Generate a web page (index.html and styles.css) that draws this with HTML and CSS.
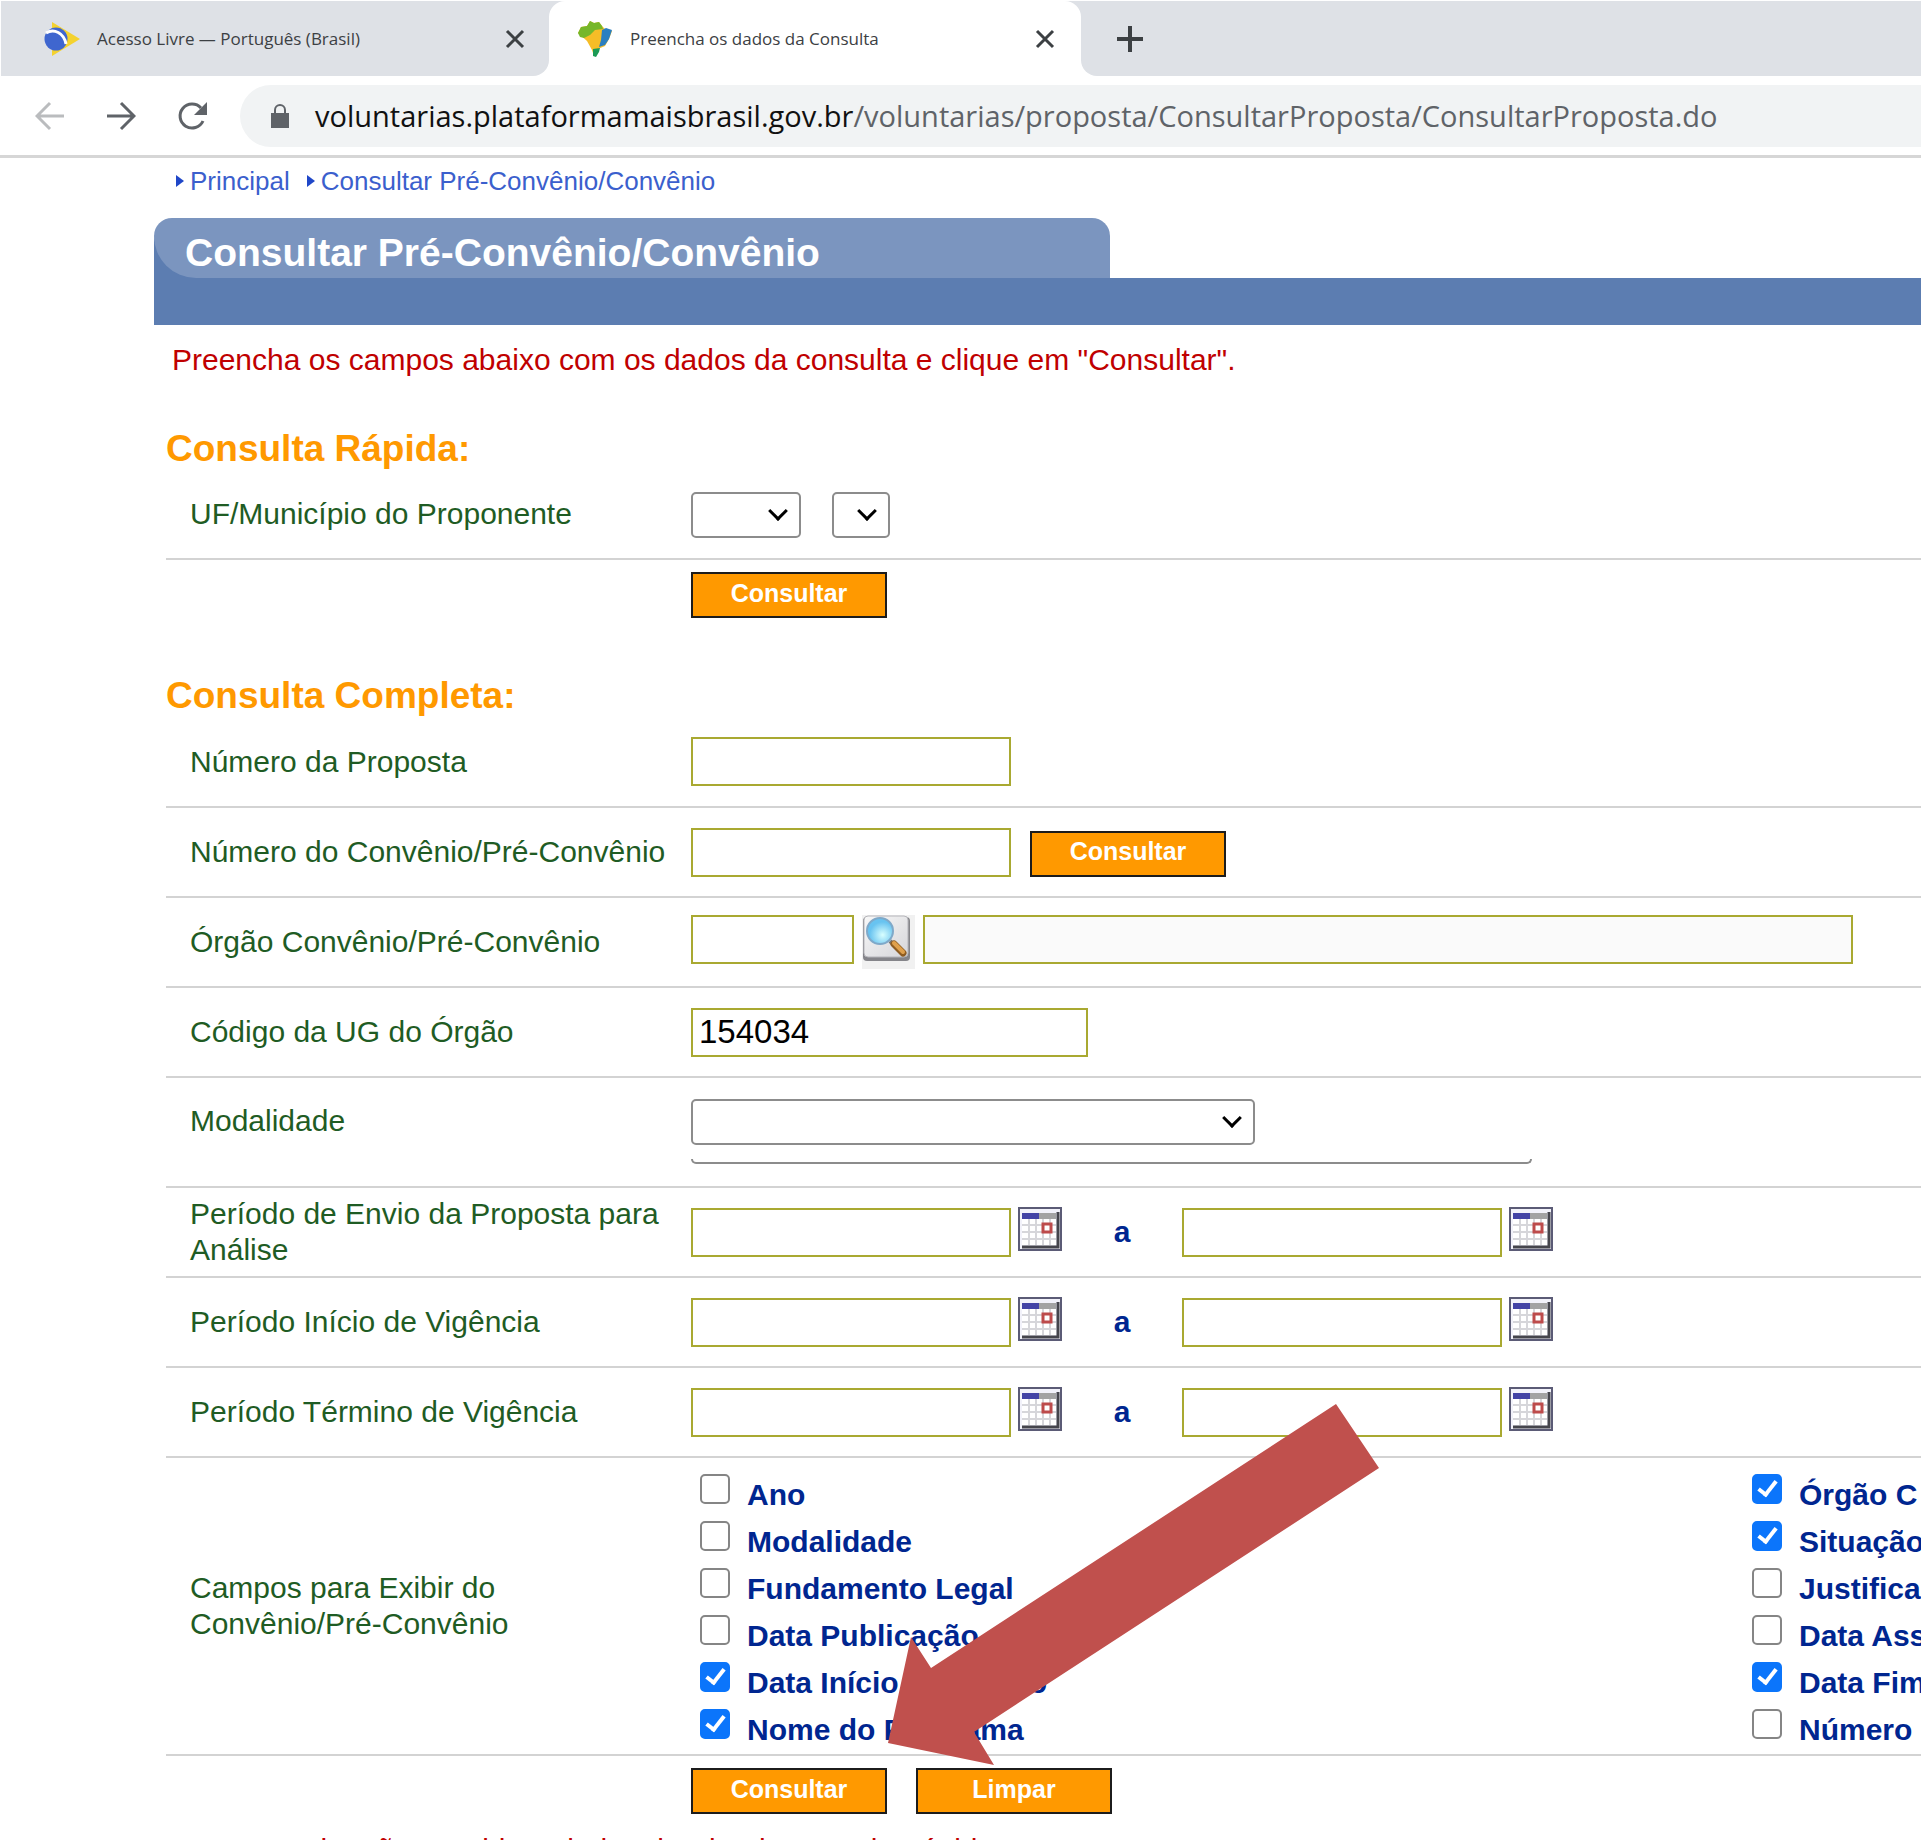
FILE: index.html
```html
<!DOCTYPE html>
<html lang="pt-BR">
<head>
<meta charset="utf-8">
<title>Preencha os dados da Consulta</title>
<link rel="stylesheet" href="styles.css">
</head>
<body>
<svg class="defs" aria-hidden="true">
  <symbol id="cal" viewBox="0 0 44 44">
    <rect x="1" y="1" width="42" height="42" fill="#f2f2fa" stroke="#5b5b76" stroke-width="2"/>
    <path d="M4 6h34v6H4z" fill="#a3a3a3"/>
    <path d="M4 6h17v6H4z" fill="#4343a5"/>
    <path d="M4 12h34v26H4z" fill="#fff"/>
    <path d="M11 12v26M18 12v26M25 12v26M32 12v26M4 18h34M4 25h34M4 32h34" stroke="#d6d6da" stroke-width="2"/>
    <path d="M4 40h36V5" fill="none" stroke="#45454c" stroke-width="3"/>
    <rect x="25" y="17" width="8" height="8" fill="#fff" stroke="#bd4b4b" stroke-width="3"/>
  </symbol>
  <symbol id="close" viewBox="0 0 20 20"><path d="M2 2l16 16M18 2L2 18" stroke="#3c4043" stroke-width="3"/></symbol>
</svg>

<header class="browser">
  <div class="tabs">
    <div class="tab">
      <svg class="fav" viewBox="0 0 36 36"><path d="M8 1L36 18 8 35z" fill="#f4d22f"/><circle cx="12" cy="18" r="11.5" fill="#3f66cf"/><path d="M2 12C10 7 20 12 22 23" fill="none" stroke="#fff" stroke-width="3"/></svg>
      <span class="tab-title">Acesso Livre — Português (Brasil)</span>
      <button class="icon-btn" aria-label="Fechar guia"><svg class="x"><use href="#close"/></svg></button>
    </div>
    <div class="tab active">
      <svg class="fav" viewBox="0 0 36 36"><path d="M1 12l3-6 6-1 3-5 4 2 5-1 3 4 3 3 7 2-3 8-4 7-7 3-5 6 1 1-2-6-5-9z" fill="#f6bd27"/><path d="M1 12l3-6 6-1 3-5 4 2 5-1 3 4 1 3-8 1-5 5-6 3-4-1z" fill="#76b72a"/><path d="M25 9l4-2 6 2-3 9-4 6-6 2 2-7z" fill="#2a7fc0"/><path d="M16 28l7-1-1 4-3 5-3-1z" fill="#1c9a55"/></svg>
      <span class="tab-title">Preencha os dados da Consulta</span>
      <button class="icon-btn" aria-label="Fechar guia"><svg class="x"><use href="#close"/></svg></button>
    </div>
    <button class="icon-btn new-tab" aria-label="Nova guia"><svg class="plus" viewBox="0 0 26 26"><path d="M13 0v26M0 13h26" stroke="#3c4043" stroke-width="4"/></svg></button>
  </div>
  <nav class="toolbar">
    <button class="icon-btn" aria-label="Voltar"><svg class="nav-ico" viewBox="0 0 30 30"><path d="M29 15H2M15 2L2 15l13 13" fill="none" stroke="#babcbe" stroke-width="3"/></svg></button>
    <button class="icon-btn" aria-label="Avançar"><svg class="nav-ico" viewBox="0 0 30 30"><path d="M1 15h27M15 2l13 13-13 13" fill="none" stroke="#5f6368" stroke-width="3"/></svg></button>
    <button class="icon-btn" aria-label="Recarregar"><svg class="nav-ico" viewBox="0 0 30 30"><path d="M26 20A12 12 0 1 1 24 7" fill="none" stroke="#5f6368" stroke-width="3"/><path d="M30 1v13H17z" fill="#5f6368"/></svg></button>
    <div class="address">
      <svg class="lock" viewBox="0 0 18 24"><path d="M0 9h18v15H0z" fill="#5f6368"/><path d="M4 10V6a5 5 0 0 1 10 0v4" fill="none" stroke="#5f6368" stroke-width="2"/></svg>
      <span class="url"><span class="host">voluntarias.plataformamaisbrasil.gov.br</span>/voluntarias/proposta/ConsultarProposta/ConsultarProposta.do</span>
    </div>
  </nav>
</header>

<main class="page">
  <nav class="crumbs"><a href="#">Principal</a><a href="#">Consultar Pré-Convênio/Convênio</a></nav>
  <div class="banner"><h1>Consultar Pré-Convênio/Convênio</h1></div>
  <p class="notice">Preencha os campos abaixo com os dados da consulta e clique em "Consultar".</p>

  <form class="form">
    <h2>Consulta Rápida:</h2>
    <div class="row">
      <label for="uf">UF/Município do Proponente</label>
      <div class="fields wide-gap">
        <span class="select s-uf"><select id="uf"><option></option></select></span>
        <span class="select s-mun"><select aria-label="Município"><option></option></select></span>
      </div>
    </div>
    <div class="actions"><button type="button" class="btn">Consultar</button></div>

    <h2 class="full">Consulta Completa:</h2>
    <div class="row first">
      <label for="prop">Número da Proposta</label>
      <div class="fields"><input class="text" id="prop" type="text"></div>
    </div>
    <div class="row">
      <label for="conv">Número do Convênio/Pré-Convênio</label>
      <div class="fields beside"><input class="text" id="conv" type="text"><button type="button" class="btn">Consultar</button></div>
    </div>
    <div class="row">
      <label for="org">Órgão Convênio/Pré-Convênio</label>
      <div class="fields organ">
        <input class="text code" id="org" type="text">
        <button type="button" class="icon-btn" aria-label="Pesquisar órgão"><svg class="search" viewBox="0 0 53 54"><defs><linearGradient id="face" x2="1" y2="1"><stop stop-color="#f8f8f8"/><stop offset="1" stop-color="#d6d6da"/></linearGradient><radialGradient id="lens" cx=".6" cy=".65"><stop stop-color="#d9ffff"/><stop offset="1" stop-color="#68c3f0"/></radialGradient></defs><path d="M0 0h53v54H0z" fill="#f1f1f1"/><rect x="1" y="2" width="47" height="44" rx="4" fill="#85858a"/><rect x="2" y="1" width="44" height="41" rx="4" fill="url(#face)" stroke="#b5b5ba"/><path d="M28 26l4 4" stroke="#777" stroke-width="4"/><path d="M32 29l9 9" stroke="#8e5c22" stroke-width="7" stroke-linecap="round"/><path d="M32 28l9 9" stroke="#dfa04c" stroke-width="4" stroke-linecap="round"/><circle cx="18" cy="16" r="13" fill="url(#lens)" stroke="#7fa9c9" stroke-width="2"/></svg></button>
        <input class="text name" type="text" aria-label="Nome do órgão" readonly>
      </div>
    </div>
    <div class="row">
      <label for="ug">Código da UG do Órgão</label>
      <div class="fields"><input class="text ug" id="ug" type="text" value="154034"></div>
    </div>
    <div class="row modal">
      <label for="mod">Modalidade</label>
      <div class="fields stack">
        <span class="select s-mod"><select id="mod"><option></option></select></span>
        <div class="cut"></div>
      </div>
    </div>
    <div class="row">
      <label for="p1">Período de Envio da Proposta para Análise</label>
      <div class="fields"><input class="text" id="p1" type="text"><button type="button" class="icon-btn" aria-label="Calendário"><svg class="cal"><use href="#cal"/></svg></button><span class="to">a</span><input class="text" type="text" aria-label="Até"><button type="button" class="icon-btn" aria-label="Calendário"><svg class="cal"><use href="#cal"/></svg></button></div>
    </div>
    <div class="row">
      <label for="p2">Período Início de Vigência</label>
      <div class="fields"><input class="text" id="p2" type="text"><button type="button" class="icon-btn" aria-label="Calendário"><svg class="cal"><use href="#cal"/></svg></button><span class="to">a</span><input class="text" type="text" aria-label="Até"><button type="button" class="icon-btn" aria-label="Calendário"><svg class="cal"><use href="#cal"/></svg></button></div>
    </div>
    <div class="row">
      <label for="p3">Período Término de Vigência</label>
      <div class="fields"><input class="text" id="p3" type="text"><button type="button" class="icon-btn" aria-label="Calendário"><svg class="cal"><use href="#cal"/></svg></button><span class="to">a</span><input class="text" type="text" aria-label="Até"><button type="button" class="icon-btn" aria-label="Calendário"><svg class="cal"><use href="#cal"/></svg></button></div>
    </div>
    <div class="row choices">
      <span class="label">Campos para Exibir do Convênio/Pré-Convênio</span>
      <div class="checks">
        <label><input type="checkbox"><span>Ano</span></label>
        <label><input type="checkbox" checked><span>Órgão C</span></label>
        <label><input type="checkbox"><span>Modalidade</span></label>
        <label><input type="checkbox" checked><span>Situação</span></label>
        <label><input type="checkbox"><span>Fundamento Legal</span></label>
        <label><input type="checkbox"><span>Justifica</span></label>
        <label><input type="checkbox"><span>Data Publicação</span></label>
        <label><input type="checkbox"><span>Data Ass</span></label>
        <label><input type="checkbox" checked><span>Data Início Execução</span></label>
        <label><input type="checkbox" checked><span>Data Fim</span></label>
        <label><input type="checkbox" checked><span>Nome do Programa</span></label>
        <label><input type="checkbox"><span>Número</span></label>
      </div>
      <svg class="arrow" viewBox="0 0 491 361"><path d="M0 339L23 233 43 264 448 0 491 64 86 328 106 361z" fill="#c0504d"/></svg>
    </div>
    <div class="actions"><button type="button" class="btn">Consultar</button><button type="reset" class="btn">Limpar</button></div>
  </form>
  <p class="footnote">Esta consulta não considera dados do Site de consulta rápida</p>
</main>
</body>
</html>
```
FILE: styles.css
```css
*, *::before, *::after { box-sizing: border-box; }
body {
  margin: 0;
  height: 100vh;
  overflow: hidden;
  background: #fff;
  font-family: "Liberation Sans", Arial, sans-serif;
  font-size: 30px;
  line-height: 36px;
}
h1, h2, p { margin: 0; }
svg { display: block; }
.defs { position: absolute; width: 0; height: 0; }
.icon-btn { flex: none; padding: 0; border: 0; background: none; }

/* browser frame */
.browser { font-family: "Open Sans", "Noto Sans", sans-serif; padding: 1px 0 0 1px; border-bottom: 3px solid #d6d6d6; }
.tabs { display: flex; height: 75px; background: linear-gradient(#dee1e6 0 50%, #fff 50%); }
.tab { display: flex; align-items: center; width: 548px; padding: 0 24px 0 43px; background: #dee1e6; border-radius: 0 0 16px 0; }
.tab.active { width: 532px; padding: 0 26px 0 28px; background: #fff; border-radius: 16px 16px 0 0; }
.fav { flex: none; width: 36px; height: 36px; }
.tab-title { flex: 1; padding-left: 17px; font-size: 17px; color: #3c4043; white-space: nowrap; }
.x { width: 20px; height: 20px; }
.new-tab { flex: 1; padding-left: 36px; background: #dee1e6; border-radius: 0 0 0 16px; }
.plus { width: 26px; height: 26px; }
.toolbar { display: flex; align-items: center; gap: 41px; height: 79px; padding-left: 34px; }
.nav-ico { width: 30px; height: 30px; }
.address { flex: 1; display: flex; align-items: center; gap: 26px; height: 62px; margin-left: -8px; padding-left: 31px; background: #f1f3f4; border-radius: 31px 0 0 31px; }
.lock { flex: none; width: 18px; height: 24px; }
.url { font-size: 29px; color: #5f6368; white-space: nowrap; }
.host { color: #111; }

/* page heading */
.page { padding-left: 154px; }
.crumbs { display: flex; gap: 17px; padding: 5px 0 0 22px; font-size: 26px; }
.crumbs a { display: flex; align-items: center; gap: 6px; color: #3b5fcd; text-decoration: none; }
.crumbs a::before { content: ""; border-left: 8px solid #1f47c8; border-top: 6px solid transparent; border-bottom: 6px solid transparent; }
.banner { margin-top: 19px; padding-bottom: 47px; background: linear-gradient(#5c7db1, #5c7db1) no-repeat 0 0 / 100px 100%, linear-gradient(#5c7db1, #5c7db1) no-repeat 0 100% / 100% 47px; border-radius: 24px 0 0 0; }
.banner h1 { width: 956px; padding: 5px 0 0 31px; height: 60px; line-height: 60px; font-size: 39px; color: #fff; background: #7b95bf; border-radius: 24px 24px 0 56px; }
.notice { padding: 17px 0 0 18px; color: #c00000; }

/* form rows */
.form { padding-left: 12px; }
h2 { padding-top: 50px; font-size: 37px; line-height: 42px; color: #ff9900; }
h2.full { padding-top: 57px; }
.row { position: relative; display: grid; grid-template-columns: 501px 1fr; align-items: center; height: 90px; padding-left: 24px; border-bottom: 2px solid #d3d3d3; color: #1f5c24; }
.row.first { height: 91px; }
.row.modal { height: 110px; align-items: start; padding-top: 20px; }
.row.modal label { padding-top: 5px; }
.row.choices { height: 298px; }
.fields { display: flex; align-items: center; }
.wide-gap { gap: 31px; }
.beside { align-items: flex-end; gap: 19px; }
.organ { align-items: flex-start; gap: 8px; }
.stack { display: block; }
.text { width: 320px; height: 49px; padding: 0 6px; border: 2px solid #a9a931; border-radius: 0; background: #fff; font: 33px "Liberation Sans", Arial, sans-serif; color: #000; }
.code { width: 163px; }
.name { width: 930px; background: #fafafa; }
.ug { width: 397px; }
.search { width: 53px; height: 54px; }
.btn { width: 196px; height: 46px; padding: 0 0 4px; border: 2px solid #1c1c1c; background: #ff9900; color: #fff; font: bold 25px "Liberation Sans", Arial, sans-serif; }
.select { position: relative; display: block; height: 46px; }
.select select { width: 100%; height: 100%; appearance: none; border: 2px solid #8c8c8c; border-radius: 5px; background: #fff; }
.select::after { content: ""; position: absolute; right: 16px; top: 13px; width: 14px; height: 14px; border: solid #000; border-width: 0 3px 3px 0; rotate: 45deg; }
.s-uf { width: 110px; }
.s-mun { width: 58px; }
.s-mod { width: 564px; }
.cut { width: 841px; height: 5px; margin-top: 15px; border: 2px solid #8c8c8c; border-top: 0; border-radius: 0 0 6px 6px; }
.cal { width: 44px; height: 44px; margin: 0 0 6px 7px; }
.to { width: 120px; text-align: center; font-weight: bold; color: #002690; }
.actions { display: flex; gap: 29px; padding: 12px 0 0 525px; }

/* columns to show in the result */
.checks { display: grid; grid-template-columns: 1052px 1fr; grid-auto-rows: 47px; padding: 9px 0 0 9px; overflow: hidden; }
.checks label { display: flex; gap: 17px; font-weight: bold; color: #002690; white-space: nowrap; }
.checks span { padding-top: 7px; }
.checks input { appearance: none; flex: none; width: 30px; height: 30px; margin: 4px 0 0; border: 2px solid #858585; border-radius: 5px; background: #fff; }
.checks input:checked { border-color: #0b75fb; background: #0b75fb; }
.checks input:checked::after { content: ""; display: block; width: 11px; height: 19px; margin: 1px 0 0 8px; border: solid #fff; border-width: 0 4px 4px 0; rotate: 38deg; }
.arrow { position: absolute; left: 722px; top: -54px; width: 491px; height: 361px; }
.footnote { padding: 18px 0 0 18px; color: #c00000; }
```
